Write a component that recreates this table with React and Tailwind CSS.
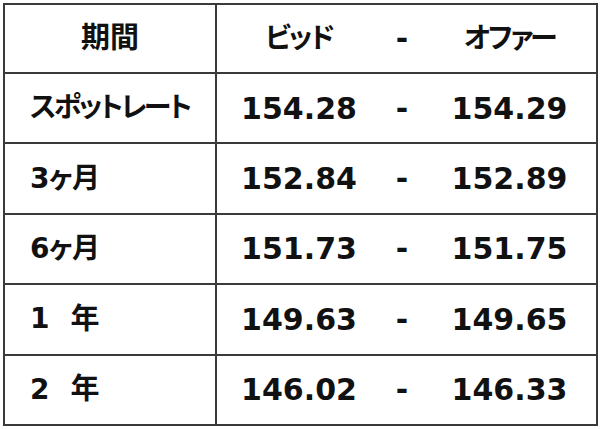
import React from "react";

const rows = [
  { term: "スポットレート", cls: "text-[28px] tracking-[-2.5px]", bid: "154.28", offer: "154.29" },
  { term: "3ヶ月", cls: "text-[28px] tracking-[-0.5px]", bid: "152.84", offer: "152.89" },
  { term: "6ヶ月", cls: "text-[28px] tracking-[-0.5px]", bid: "151.73", offer: "151.75" },
  { term: "1 年", cls: "text-[28px]", bid: "149.63", offer: "149.65" },
  { term: "2 年", cls: "text-[28px]", bid: "146.02", offer: "146.33" },
];

const font = "font-['DejaVu_Sans','Noto_Sans_CJK_JP',sans-serif] font-bold [font-feature-settings:'palt']";

const RightCell = ({ children }) => (
  <div className="bg-white flex items-center text-[30px]">{children}</div>
);

const App = () => {
  return (
    <div className={`w-[600px] h-[429px] bg-white pt-[3px] pl-[3px] text-[#111] ${font}`}>
      <div className="w-[595px] h-[423px] p-[2px] gap-[2px] bg-[#3a3a3a] grid grid-cols-[210px_1fr] grid-rows-[67px_repeat(5,1fr)]">
        {/* Header */}
        <div className="bg-white flex items-center justify-center text-[29px]">期間</div>
        <RightCell>
          <div className="w-[164px] text-center text-[28px] tracking-[-2px]">ビッド</div>
          <div className="w-[42px] text-center">-</div>
          <div className="flex-1 text-center text-[28px] tracking-[-2.5px]">オファー</div>
        </RightCell>

        {rows.map((r) => {
          const [a, b] = r.term.split(" ");
          return (
            <React.Fragment key={r.term}>
              <div className={`bg-white flex items-center pl-[25px] ${r.cls}`}>
                <span>{a}</span>
                {b && <span className="ml-[21px] text-[29px]">{b}</span>}
              </div>
              <RightCell>
                <div className="w-[164px] text-center">{r.bid}</div>
                <div className="w-[42px] text-center">-</div>
                <div className="flex-1 text-center">{r.offer}</div>
              </RightCell>
            </React.Fragment>
          );
        })}
      </div>
    </div>
  );
};

export default App;
